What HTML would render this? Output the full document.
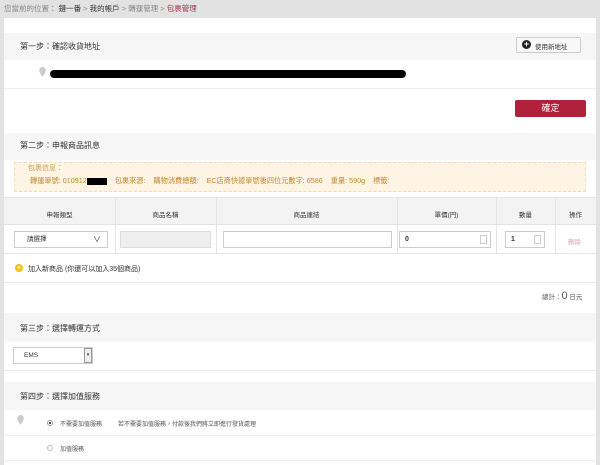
<!DOCTYPE html>
<html><head><meta charset="utf-8"><style>
*{margin:0;padding:0;box-sizing:border-box}
body{width:600px;height:465px;background:#e2e2e2;font-family:"Liberation Sans","Noto Sans CJK TC",sans-serif;color:#333;position:relative;overflow:hidden;font-size:7px}
.a{position:absolute;white-space:nowrap}
.panel{position:absolute;left:4px;top:18px;width:592px;height:447px;background:#fff}
.band{position:absolute;left:4px;width:592px;background:#f6f6f6}
.hd{font-size:8px;color:#333}
.line{position:absolute;left:4px;width:592px;height:1px;background:#ececec}
.vb{position:absolute;top:197px;width:1px;height:57px;background:#e4e4e4}
</style></head><body>
<div class="a" style="left:4px;top:3px;color:#888;font-size:7.5px">您當前的位置： <span style="color:#333">鏈一番</span> &gt; <span style="color:#333">我的帳戶</span> &gt; 轉運管理 &gt; <span style="color:#a33050">包裹管理</span></div>
<div class="panel"></div>

<div class="band" style="top:33px;height:27px"></div>
<div class="a hd" style="left:20px;top:41px">第一步：確認收貨地址</div>
<div class="a" style="left:516px;top:37px;width:65px;height:16px;border:1px solid #ccc;background:#f8f8f8;border-radius:2px"></div>
<div class="a" style="left:522px;top:40px;width:9px;height:9px;border-radius:50%;background:#222;color:#fff;font-size:9px;line-height:9px;text-align:center;font-weight:bold">+</div>
<div class="a" style="left:535px;top:41px;font-size:6.5px">使用新地址</div>
<svg class="a" style="left:38px;top:66px" width="9" height="12"><path d="M4.5 1a3.3 3.3 0 0 0-3.3 3.3c0 2.5 3.3 6.5 3.3 6.5s3.3-4 3.3-6.5A3.3 3.3 0 0 0 4.5 1z" fill="#ccc"/></svg>
<div class="a" style="left:50px;top:70px;width:356px;height:8px;background:#000;border-radius:4px"></div>
<div class="line" style="top:88px"></div>
<div class="a" style="left:515px;top:100px;width:71px;height:17px;background:#b2213b;border-radius:2px;color:#fff;font-size:9px;text-align:center;line-height:17px">確定</div>

<div class="band" style="top:133px;height:27px"></div>
<div class="a hd" style="left:20px;top:140px">第二步：申報商品訊息</div>
<div class="a" style="left:14px;top:162px;width:572px;height:30px;background:#fdf4e4;border:1px dashed #f0dcb5"></div>
<div class="a" style="left:28px;top:163px;color:#c99a50;font-size:7px">包裹信息：</div>
<div class="a" style="left:30px;top:176px;color:#c08a30;font-size:7.2px">轉運單號: 010912<span style="display:inline-block;width:20px;height:7px;background:#000;vertical-align:middle"></span>&nbsp;&nbsp;&nbsp; 包裹來源: &nbsp;&nbsp; 購物消費總額: &nbsp;&nbsp; EC店商快遞單號後四位元數字: 6586 &nbsp;&nbsp; 重量: 590g &nbsp;&nbsp; 標籤:</div>

<div class="a" style="left:4px;top:197px;width:592px;height:28px;background:#f3f3f3;border-top:1px solid #e4e4e4;border-bottom:1px solid #e4e4e4"></div>
<div class="a" style="left:4px;top:225px;width:592px;height:29px;border-bottom:1px solid #e8e8e8"></div>
<div class="vb" style="left:115px"></div>
<div class="vb" style="left:216px"></div>
<div class="vb" style="left:397px"></div>
<div class="vb" style="left:496px"></div>
<div class="vb" style="left:555px"></div>
<div class="a" style="left:4px;top:209px;width:111px;text-align:center;font-size:6.5px">申報類型</div>
<div class="a" style="left:115px;top:209px;width:101px;text-align:center;font-size:6.5px">商品名稱</div>
<div class="a" style="left:216px;top:209px;width:181px;text-align:center;font-size:6.5px">商品連結</div>
<div class="a" style="left:397px;top:209px;width:99px;text-align:center;font-size:6.5px">單價(円)</div>
<div class="a" style="left:496px;top:209px;width:59px;text-align:center;font-size:6.5px">數量</div>
<div class="a" style="left:555px;top:209px;width:41px;text-align:center;font-size:6.5px">操作</div>
<div class="a" style="left:14px;top:231px;width:94px;height:17px;border:1px solid #ccc;font-size:6.5px;line-height:15px;padding-left:12px">請選擇<span style="position:absolute;right:6px;font-size:8px">∨</span></div>
<div class="a" style="left:120px;top:231px;width:91px;height:17px;border:1px solid #ddd;background:#efefef"></div>
<div class="a" style="left:223px;top:231px;width:169px;height:17px;border:1px solid #ccc"></div>
<div class="a" style="left:399px;top:231px;width:92px;height:17px;border:1px solid #ccc;font-size:7px;font-weight:bold;line-height:15px;padding-left:5px">0</div>
<div class="a" style="left:505px;top:231px;width:40px;height:17px;border:1px solid #ccc;font-size:7px;font-weight:bold;line-height:15px;padding-left:5px">1</div>
<div class="a" style="left:480px;top:235px;width:7px;height:9px;border:1px solid #ccc"></div>
<div class="a" style="left:534px;top:235px;width:7px;height:9px;border:1px solid #ccc"></div>
<div class="a" style="left:568px;top:236px;color:#d8a0b0;font-size:6.5px">刪除</div>
<div class="a" style="left:15px;top:264px;width:8px;height:8px;border-radius:50%;background:#f0c020;color:#fff;font-size:8px;line-height:8px;text-align:center">+</div>
<div class="a" style="left:28px;top:264px;font-size:7px">加入新商品 (你還可以加入35個商品)</div>
<div class="line" style="top:282px"></div>
<div class="a" style="left:542px;top:290px;font-size:6.5px;color:#555">總計：<span style="font-size:11px">0</span> 日元</div>

<div class="band" style="top:313px;height:29px"></div>
<div class="a hd" style="left:20px;top:323px">第三步：選擇轉運方式</div>
<div class="a" style="left:13px;top:347px;width:80px;height:17px;border:1px solid #ccc;font-size:6.5px;line-height:15px;padding-left:10px">EMS</div>
<div class="a" style="left:84px;top:348px;width:8px;height:15px;border:1px solid #999;background:#eee;font-size:5px;line-height:13px;text-align:center">▾</div>
<div class="line" style="top:370px"></div>

<div class="band" style="top:382px;height:28px"></div>
<div class="a hd" style="left:20px;top:391px">第四步：選擇加值服務</div>
<svg class="a" style="left:16px;top:414px" width="9" height="12"><path d="M4.5 1a3.3 3.3 0 0 0-3.3 3.3c0 2.5 3.3 6.5 3.3 6.5s3.3-4 3.3-6.5A3.3 3.3 0 0 0 4.5 1z" fill="#ccc"/></svg>
<div class="a" style="left:47px;top:420px;width:6px;height:6px;border-radius:50%;border:1px solid #999;background:radial-gradient(#335 35%,#fff 45%)"></div>
<div class="a" style="left:60px;top:419px;font-size:6px;color:#555">不需要加值服務</div>
<div class="a" style="left:118px;top:419px;font-size:6px;color:#555">若不需要加值服務，付款後我們將立即進行發貨處理</div>
<div class="line" style="top:435px"></div>
<div class="a" style="left:47px;top:445px;width:6px;height:6px;border-radius:50%;border:1px solid #bbb"></div>
<div class="a" style="left:60px;top:444px;font-size:6px;color:#555">加值服務</div>
<div class="line" style="top:460px"></div>
</body></html>
